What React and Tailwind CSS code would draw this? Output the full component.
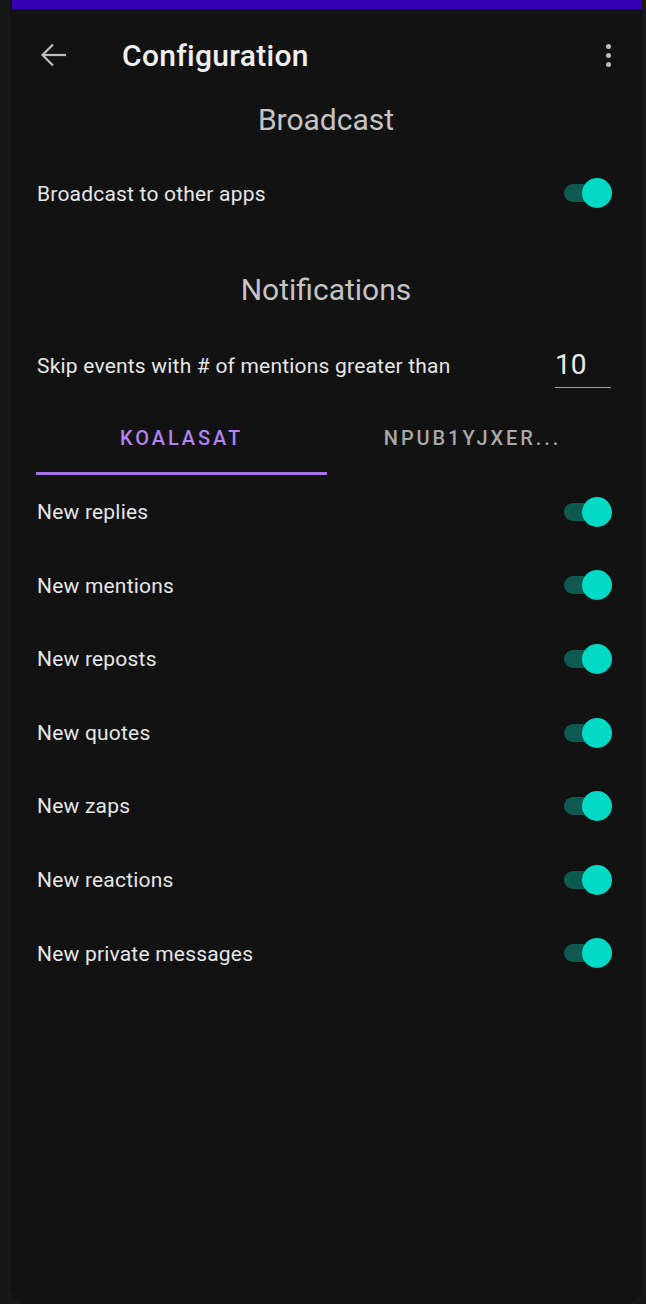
const rows = [
  'New replies',
  'New mentions',
  'New reposts',
  'New quotes',
  'New zaps',
  'New reactions',
  'New private messages',
];

function Toggle() {
  return (
    <div className="relative w-[48px] h-[30px] shrink-0">
      <div className="absolute left-0 top-[6px] w-[38px] h-[18px] rounded-full bg-[#0e5a52]" />
      <div className="absolute right-0 top-0 w-[30px] h-[30px] rounded-full bg-[#03dac5]" />
    </div>
  );
}

export default function App() {
  return (
    <div
      className="min-h-[1304px] bg-[#181818] flex"
      style={{ fontFamily: 'Roboto, "Noto Sans", sans-serif' }}
    >
      <div className="ml-[10px] w-[632px] min-h-[1304px] bg-[#121212] rounded-b-[18px] flex flex-col">
        <div className="h-[9px] ml-[2px] bg-[#3700b3]" />

        <header className="h-[92px] flex items-center">
          <svg className="ml-[30px] w-[27px] h-[26px]" viewBox="0 0 27 26" fill="none" stroke="#bdbdbd" strokeWidth="2.2">
            <path d="M26 13H2.5" />
            <path d="M13 2.5 2.5 13 13 23.5" />
          </svg>
          <h1 className="ml-[55px] text-[30px] font-medium text-[#f0f0f0] tracking-[0.3px]">Configuration</h1>
          <div className="ml-auto mr-[31px] flex flex-col gap-[4px]">
            <span className="w-[5px] h-[5px] rounded-full bg-[#bdbdbd]" />
            <span className="w-[5px] h-[5px] rounded-full bg-[#bdbdbd]" />
            <span className="w-[5px] h-[5px] rounded-full bg-[#bdbdbd]" />
          </div>
        </header>

        <div className="h-[36px] flex items-center justify-center text-[30px] text-[#c4c4c4]">Broadcast</div>

        <div className="h-[112px] flex items-center justify-between pl-[27px] pr-[30px]">
          <span className="pt-[3px] text-[21px] tracking-[0.2px] text-[#e6e6e6]">Broadcast to other apps</span>
          <Toggle />
        </div>

        <div className="h-[80px] flex items-center justify-center text-[30px] text-[#c4c4c4]">Notifications</div>

        <div className="h-[72px] flex items-center justify-between pl-[27px] pr-[31px]">
          <span className="pt-[3px] text-[21px] tracking-[0.2px] text-[#e6e6e6]">Skip events with # of mentions greater than</span>
          <div className="w-[56px] h-[46px] flex flex-col justify-end">
            <span className="text-[28px] text-[#ececec] leading-none pb-[8px]">10</span>
            <div className="h-[1.5px] bg-[#9e9e9e]" />
          </div>
        </div>

        <div className="flex ml-[26px] w-[582px] h-[74px]">
          <div className="w-1/2 flex flex-col">
            <div className="flex-1 flex items-center justify-center pt-[2px] text-[20px] font-medium tracking-[2.9px] text-[#b084f0]">KOALASAT</div>
            <div className="h-[3px] bg-[#a673e6]" />
          </div>
          <div className="w-1/2 flex flex-col">
            <div className="flex-1 flex items-center justify-center pt-[2px] text-[20px] font-medium tracking-[2.9px] text-[#a8a8a8]">NPUB1YJXER...</div>
            <div className="h-[3px]" />
          </div>
        </div>

        {rows.map((label) => (
          <div key={label} className="h-[73.6px] flex items-center justify-between pl-[27px] pr-[30px]">
            <span className="pt-[2px] text-[21px] tracking-[0.2px] text-[#e6e6e6]">{label}</span>
            <Toggle />
          </div>
        ))}
      </div>
    </div>
  );
}
